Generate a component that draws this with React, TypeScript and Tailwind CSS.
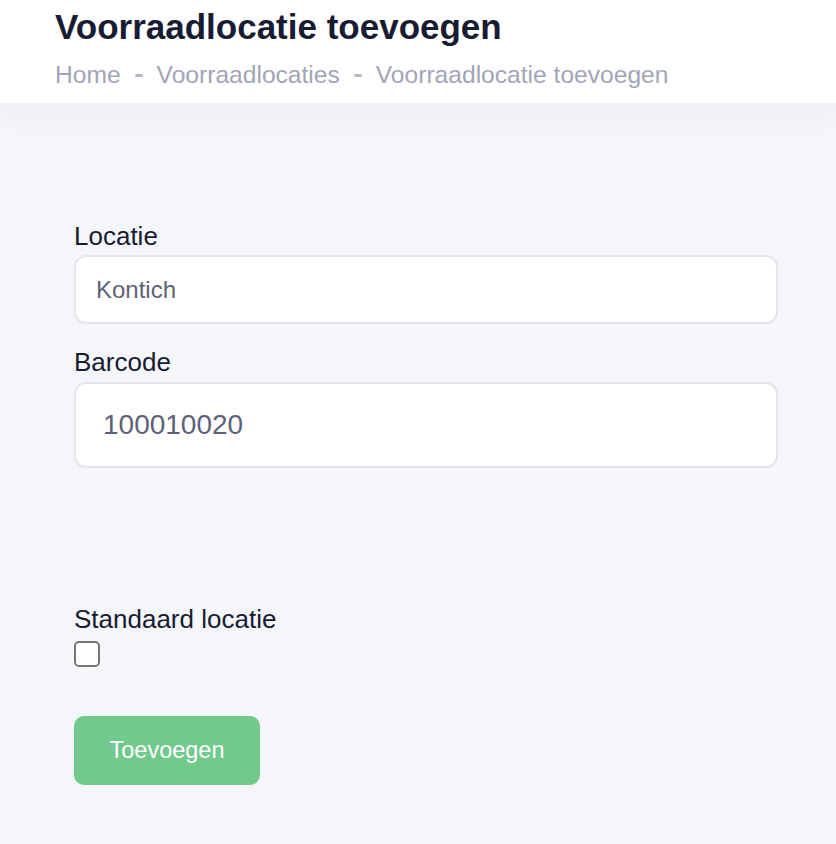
import { useState } from "react";

const font = { fontFamily: '"Liberation Sans", Arial, sans-serif' };

function Crumbs({ items }: { items: string[] }) {
  return (
    <ol className="mt-[13px] flex items-center text-[24.6px] leading-[30px] text-[#a1a5b7]">
      {items.map((item, i) => (
        <li key={item} className="flex items-center">
          {i > 0 && <span className="mx-[14px] h-[3px] w-[8px] rounded-sm bg-[#b5b8c6]" />}
          {item}
        </li>
      ))}
    </ol>
  );
}

export default function App() {
  const [isDefault, setIsDefault] = useState(false);

  return (
    <main style={font} className="flex min-h-[844px] w-full flex-col bg-[#f5f6f9]">
      <header className="relative z-10 h-[103px] bg-white px-[55px] pt-[7px] shadow-[0_12px_30px_0_rgba(82,63,105,0.04)]">
        <h1 className="text-[35px] font-bold leading-[40px] text-[#181c32]">
          Voorraadlocatie toevoegen
        </h1>
        <Crumbs items={["Home", "Voorraadlocaties", "Voorraadlocatie toevoegen"]} />
      </header>

      <form className="flex flex-col pl-[74px] pr-[58px] pt-[118px]" onSubmit={(e) => e.preventDefault()}>
        <label className="mb-[4px] text-[26px] leading-[30px] text-[#181c32]">Locatie</label>
        <input
          defaultValue="Kontich"
          className="h-[69px] rounded-[12px] border-2 border-[#e4e6ef] bg-white px-[20px] text-[24px] text-[#5e6278] outline-none"
        />

        <label className="mb-[5px] mt-[23px] text-[26px] leading-[30px] text-[#181c32]">Barcode</label>
        <input
          defaultValue="100010020"
          className="h-[86px] rounded-[12px] border-2 border-[#e4e6ef] bg-white px-[27px] text-[28px] text-[#5e6278] outline-none"
        />

        <label className="mt-[136px] text-[26px] leading-[30px] text-[#181c32]">Standaard locatie</label>
        <button
          type="button"
          onClick={() => setIsDefault(!isDefault)}
          className="mt-[7px] h-[26px] w-[26px] rounded-[5px] border-2 border-[#767676] bg-white"
        />

        <button
          type="submit"
          className="mt-[49px] h-[69px] w-[186px] rounded-[10px] bg-[#72c98c] text-[23.5px] text-white"
        >
          Toevoegen
        </button>
      </form>
    </main>
  );
}
